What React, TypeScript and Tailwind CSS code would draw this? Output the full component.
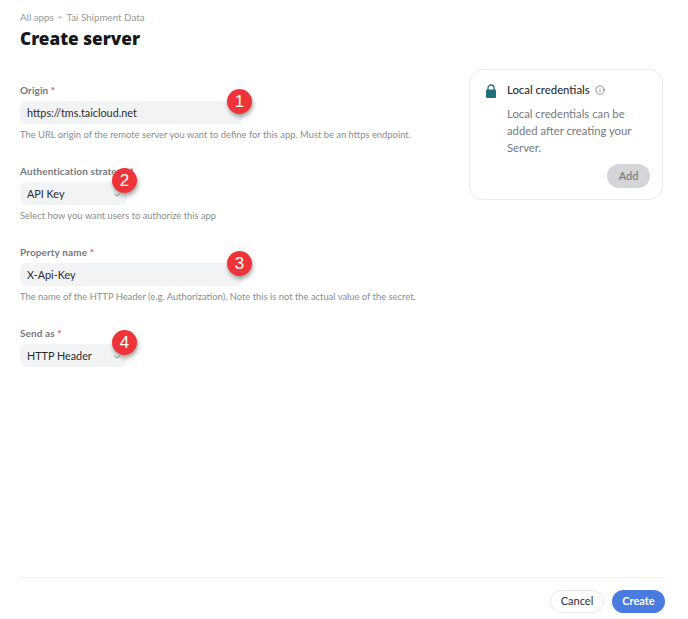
import { Info, ChevronDown } from "lucide-react"

const fieldFont = "font-['Lato','Noto_Sans',sans-serif]"

function Badge({ n, className }: { n: number; className: string }) {
  return (
    <span
      className={`absolute flex h-[25px] w-[25px] items-center justify-center rounded-full bg-[#ee3438] text-[17px] leading-none text-white shadow-[1px_3px_4px_rgba(0,0,0,0.35)] font-['Liberation_Sans',sans-serif] ${className}`}
    >
      {n}
    </span>
  )
}

function Label({ text }: { text: string }) {
  return (
    <div className="h-[13px] text-[10px] leading-[13px] font-bold tracking-[0.1px] text-[#77797c]">
      {text} <span className="text-[#e0555c]">*</span>
    </div>
  )
}

function Help({ text }: { text: string }) {
  return <p className="mt-[4px] h-[13px] text-[9.4px] leading-[13px] whitespace-nowrap text-[#8b8d90]">{text}</p>
}

function Field({
  label,
  value,
  help,
  badge,
  select,
}: {
  label: string
  value: string
  help?: string
  badge: number
  select?: boolean
}) {
  return (
    <div className="relative">
      <Label text={label} />
      <div
        className={`relative mt-[4px] flex h-[23px] items-center rounded-[7px] bg-[#f2f3f5] pl-[7px] text-[10.8px] text-[#2a2b2d] ${
          select ? "w-[107px]" : "w-[223px]"
        }`}
      >
        <span className="pt-[1px]">{value}</span>
        {select && <ChevronDown className="absolute top-[8px] right-[5px] h-[10px] w-[10px] text-[#6b6d70]" strokeWidth={2} />}
      </div>
      {help && <Help text={help} />}
      {select ? <Badge n={badge} className="top-[3px] left-[92px]" /> : <Badge n={badge} className="top-[5px] left-[207px]" />}
    </div>
  )
}

export default function App() {
  return (
    <div className={`flex h-[619px] w-[688px] flex-col overflow-hidden bg-white pr-[23px] pl-[20px] ${fieldFont}`}>
      <div className="mt-[11px] flex h-[12px] items-center text-[9.8px] leading-[12px] text-[#96989b]">
        All apps <span className="mx-[4px] text-[8px]">&gt;</span> Tai Shipment Data
      </div>
      <h1 className="mt-[5px] font-['Noto_Sans',sans-serif] text-[17.2px] leading-[22px] font-black text-[#16171a]">Create server</h1>

      <div className="mt-[24px] flex flex-1 justify-between">
        <div className="flex flex-col gap-[24px] pt-[10px]">
          <Field
            label="Origin"
            value="https://tms.taicloud.net"
            help="The URL origin of the remote server you want to define for this app. Must be an https endpoint."
            badge={1}
          />
          <Field
            label="Authentication strategy"
            value="API Key"
            help="Select how you want users to authorize this app"
            badge={2}
            select
          />
          <Field
            label="Property name"
            value="X-Api-Key"
            help="The name of the HTTP Header (e.g. Authorization). Note this is not the actual value of the secret."
            badge={3}
          />
          <Field label="Send as" value="HTTP Header" badge={4} select />
        </div>

        <div className="mt-[-5px] mr-[2px] h-[131px] w-[194px] rounded-[14px] border border-[#e9eaec] pt-[13px] pr-[12px] pl-[15px]">
          <div className="flex items-start gap-[10px]">
            <svg viewBox="0 0 12 14" className="mt-[1px] h-[14px] w-[12px] shrink-0" fill="#1f6f7a">
              <path d="M3 6V4a3 3 0 0 1 6 0v2" fill="none" stroke="#1f6f7a" strokeWidth="1.3" />
              <rect x="1" y="5.5" width="10" height="8.5" rx="1" />
            </svg>
            <div className="flex-1">
              <div className="flex items-center gap-[5px] text-[11.3px] leading-[14px] font-medium text-[#2c2d30]">
                Local credentials
                <Info className="h-[10px] w-[10px] text-[#55575a]" strokeWidth={1.5} />
              </div>
              <p className="mt-[8px] text-[11.3px] leading-[17px] text-[#77797c]">
                Local credentials can be added after creating your Server.
              </p>
            </div>
          </div>
          <div className="mt-[8px] flex justify-end">
            <button className="h-[24px] w-[43px] rounded-full bg-[#d3d5d8] text-[11px] font-medium text-[#77797c]">Add</button>
          </div>
        </div>
      </div>

      <div className="flex h-[42px] items-end justify-end gap-[8px] border-t border-[#eeeff1] pb-[6px]">
        <button className="h-[23px] w-[54px] rounded-full border border-[#e6e7e9] bg-white text-[11px] font-medium text-[#3a3b3e]">Cancel</button>
        <button className="h-[23px] w-[53px] rounded-full bg-[#4a7be0] text-[11px] font-bold text-white">Create</button>
      </div>
    </div>
  )
}
